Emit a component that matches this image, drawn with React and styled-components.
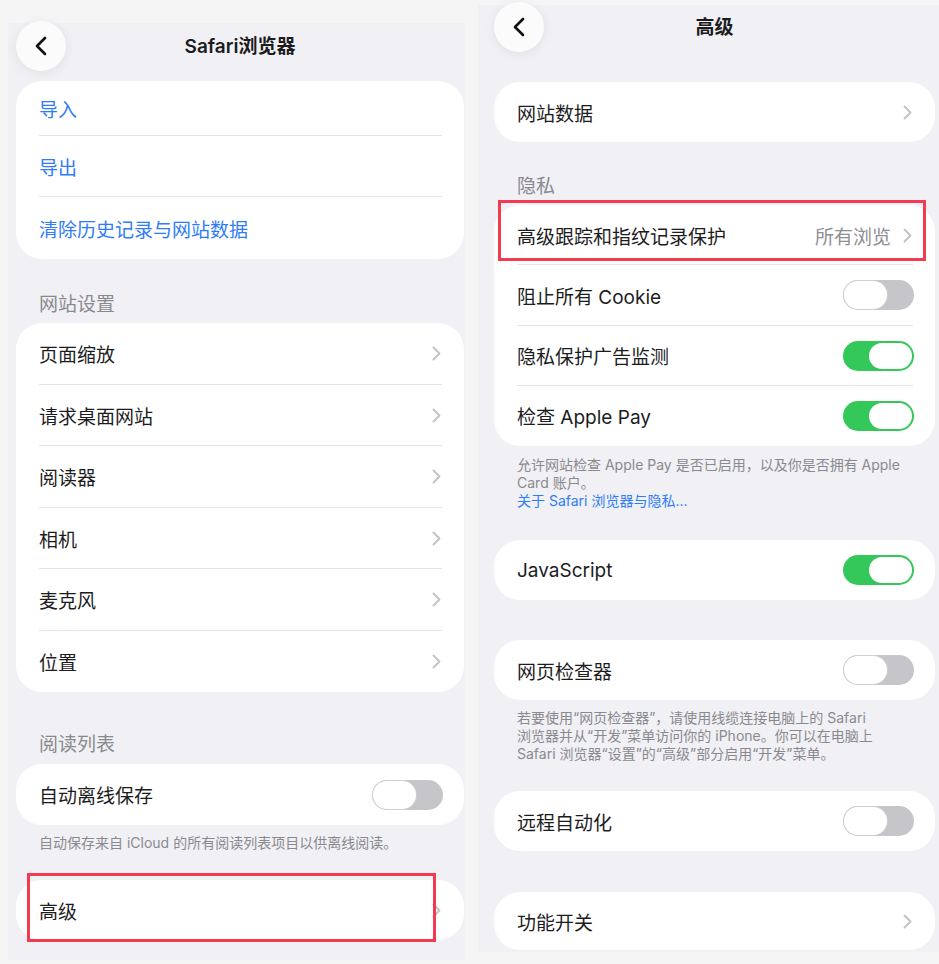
import React from "react";
import styled, { createGlobalStyle } from "styled-components";

const blue = "#2f7cf6";
const ink = "#1c1c1e";
const gray = "#8a8a8e";
const green = "#34c759";

const GlobalStyle = createGlobalStyle`
  body {
    margin: 0;
    background: #f5f5f6;
    font-family: Inter, "Noto Sans CJK SC", sans-serif;
  }
  * { box-sizing: border-box; }
`;

const Page = styled.div`
  display: flex;
  align-items: flex-start;
  width: 939px;
  height: 964px;
  overflow: hidden;
`;

const Panel = styled.div`
  display: flex;
  flex-flow: column;
  flex-shrink: 0;
  margin: ${(p) => p.$top}px 0 0 ${(p) => p.$left}px;
  width: ${(p) => p.$width}px;
  height: ${(p) => p.$height}px;
  padding-left: ${(p) => p.$pad}px;
  background: #f0f0f5;
`;

const Column = styled.div`
  display: flex;
  flex-flow: column;
  width: ${(p) => p.$width}px;
`;

const Nav = styled.div`
  display: grid;
  grid-template-columns: 50px 1fr 50px;
  align-items: center;
  height: ${(p) => p.$h}px;
  margin-top: ${(p) => p.$mt}px;
`;

const BackButton = styled.div`
  width: 50px;
  height: 50px;
  border-radius: 50%;
  background: #fbfbfc;
  box-shadow: 0 2px 12px rgba(0, 0, 0, 0.07);
  display: flex;
  align-items: center;
  justify-content: center;
`;

const Title = styled.div`
  text-align: center;
  font-size: 19px;
  font-weight: 600;
  color: ${ink};
  padding-bottom: 3px;
`;

const Card = styled.div`
  background: #fff;
  border-radius: 26px;
  margin-top: ${(p) => p.$mt}px;
`;

const Row = styled.div`
  position: relative;
  display: flex;
  align-items: center;
  height: ${(p) => p.$h || 61}px;
  padding: 0 21px 0 23px;

  &:not(:last-child)::after {
    content: "";
    position: absolute;
    left: 23px;
    right: 22px;
    bottom: 0;
    height: 1px;
    background: #e4e4e9;
  }
`;

const Label = styled.span`
  flex: 1;
  font-size: 19px;
  color: ${(p) => (p.$blue ? blue : ink)};
  white-space: nowrap;
`;

const Value = styled.span`
  font-size: 19px;
  color: #8e8e93;
  margin-right: 12px;
`;

const SectionHeader = styled.div`
  font-size: 19px;
  line-height: 24px;
  color: ${gray};
  padding-left: 23px;
  margin: ${(p) => p.$mt}px 0 6px;
`;

const Footnote = styled.div`
  font-size: 14px;
  line-height: 18px;
  color: ${gray};
  padding-left: 23px;
  margin-top: ${(p) => p.$mt}px;

  span {
    display: block;
    white-space: nowrap;
  }
`;

const Link = styled.span`
  color: ${blue};
`;

const Track = styled.span`
  position: relative;
  flex-shrink: 0;
  width: 71px;
  height: 30px;
  border-radius: 15px;
  background: ${(p) => (p.$on ? green : "#c6c6ca")};
`;

const Knob = styled.span`
  position: absolute;
  top: ${(p) => (p.$on ? 2 : 1)}px;
  left: ${(p) => (p.$on ? 26 : 1)}px;
  width: 43px;
  height: ${(p) => (p.$on ? 26 : 28)}px;
  border-radius: 14px;
  background: #fff;
  box-shadow: ${(p) => (p.$on ? "none" : "0 0 0 1px #d0d0d4")};
`;

const Highlight = styled.span`
  position: absolute;
  top: ${(p) => p.$t}px;
  left: ${(p) => p.$l}px;
  right: ${(p) => p.$r}px;
  bottom: ${(p) => p.$b}px;
  border: 3px solid #f23a50;
  pointer-events: none;
`;

const Chevron = () => (
  <svg width="9" height="15" viewBox="0 0 9 15" style={{ marginRight: 2 }}>
    <path d="M1.5 1.5 L7.5 7.5 L1.5 13.5" fill="none" stroke="#c4c4c8" strokeWidth="2" strokeLinecap="round" strokeLinejoin="round" />
  </svg>
);

const Toggle = ({ on }) => (
  <Track $on={on}>
    <Knob $on={on} />
  </Track>
);

const Back = () => (
  <BackButton>
    <svg width="14" height="20" viewBox="0 0 14 20">
      <path d="M11 2 L3 10 L11 18" fill="none" stroke="#111" strokeWidth="2.6" strokeLinecap="round" strokeLinejoin="round" />
    </svg>
  </BackButton>
);

const siteSettings = ["页面缩放", "请求桌面网站", "阅读器", "相机", "麦克风", "位置"];

const SafariSettings = () => (
  <Panel $top={23} $left={8} $width={457} $height={937} $pad={8}>
    <Column $width={448}>
      <Nav $h={50} $mt={-2}>
        <Back />
        <Title>Safari浏览器</Title>
      </Nav>
      <Card $mt={10}>
        <Row $h={55}><Label $blue>导入</Label></Row>
        <Row $h={61}><Label $blue>导出</Label></Row>
        <Row $h={62}><Label $blue>清除历史记录与网站数据</Label></Row>
      </Card>
      <SectionHeader $mt={34}>网站设置</SectionHeader>
      <Card $mt={0}>
        {siteSettings.map((name) => (
          <Row key={name} $h={61.5}>
            <Label>{name}</Label>
            <Chevron />
          </Row>
        ))}
      </Card>
      <SectionHeader $mt={41}>阅读列表</SectionHeader>
      <Card $mt={1}>
        <Row>
          <Label>自动离线保存</Label>
          <Toggle />
        </Row>
      </Card>
      <Footnote $mt={9}>
        <span>自动保存来自 iCloud 的所有阅读列表项目以供离线阅读。</span>
      </Footnote>
      <Card $mt={28}>
        <Row $h={60}>
          <Label>高级</Label>
          <Chevron />
          <Highlight $t={-7} $l={11} $r={28} $b={-2} />
        </Row>
      </Card>
    </Column>
  </Panel>
);

const AdvancedSettings = () => (
  <Panel $top={5} $left={13} $width={461} $height={947} $pad={16}>
    <Column $width={441}>
      <Nav $h={49} $mt={-3}>
        <Back />
        <Title>高级</Title>
      </Nav>
      <Card $mt={31}>
        <Row $h={60}>
          <Label>网站数据</Label>
          <Chevron />
        </Row>
      </Card>
      <SectionHeader $mt={33}>隐私</SectionHeader>
      <Card $mt={0}>
        <Row $h={60.25}>
          <Label>高级跟踪和指纹记录保护</Label>
          <Value>所有浏览</Value>
          <Chevron />
          <Highlight $t={-5} $l={4} $r={9} $b={4} />
        </Row>
        <Row $h={60.25}>
          <Label>阻止所有 Cookie</Label>
          <Toggle />
        </Row>
        <Row $h={60.25}>
          <Label>隐私保护广告监测</Label>
          <Toggle on />
        </Row>
        <Row $h={60.25}>
          <Label>检查 Apple Pay</Label>
          <Toggle on />
        </Row>
      </Card>
      <Footnote $mt={10}>
        <span>允许网站检查 Apple Pay 是否已启用，以及你是否拥有 Apple</span>
        <span>Card 账户。</span>
        <Link>关于 Safari 浏览器与隐私...</Link>
      </Footnote>
      <Card $mt={30}>
        <Row $h={60}>
          <Label>JavaScript</Label>
          <Toggle on />
        </Row>
      </Card>
      <Card $mt={40}>
        <Row $h={60}>
          <Label>网页检查器</Label>
          <Toggle />
        </Row>
      </Card>
      <Footnote $mt={9}>
        <span>若要使用“网页检查器”，请使用线缆连接电脑上的 Safari</span>
        <span>浏览器并从“开发”菜单访问你的 iPhone。你可以在电脑上</span>
        <span>Safari 浏览器“设置”的“高级”部分启用“开发”菜单。</span>
      </Footnote>
      <Card $mt={28}>
        <Row $h={60}>
          <Label>远程自动化</Label>
          <Toggle />
        </Row>
      </Card>
      <Card $mt={41}>
        <Row $h={58}>
          <Label>功能开关</Label>
          <Chevron />
        </Row>
      </Card>
    </Column>
  </Panel>
);

export default function App() {
  return (
    <>
      <GlobalStyle />
      <Page>
        <SafariSettings />
        <AdvancedSettings />
      </Page>
    </>
  );
}
